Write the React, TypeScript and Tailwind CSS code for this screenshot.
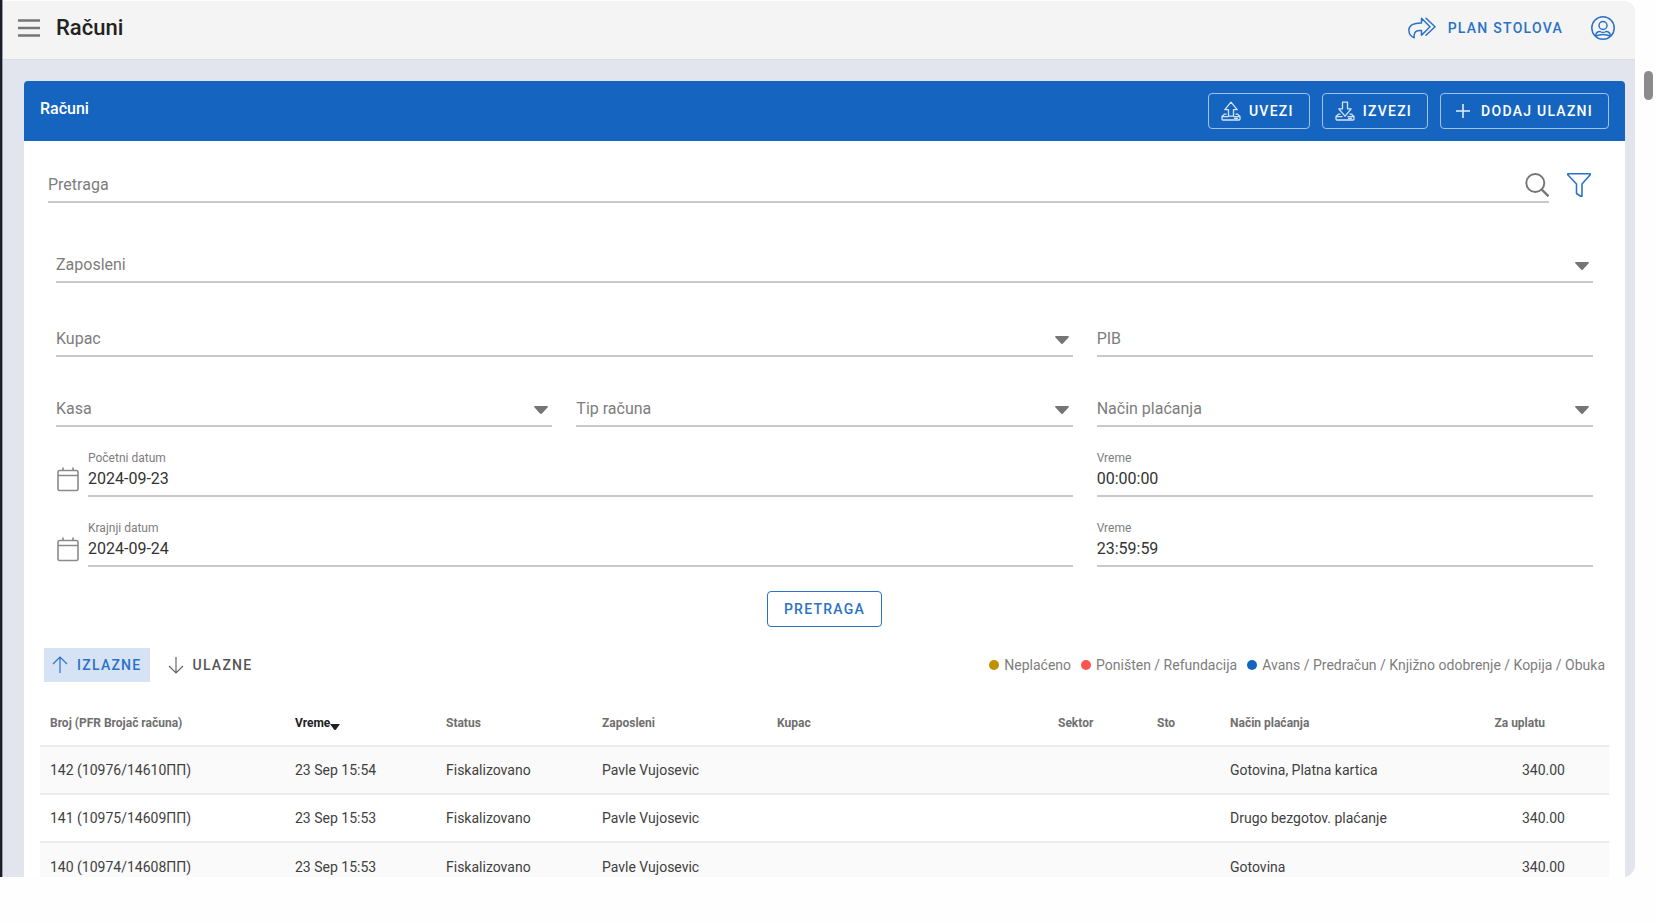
import React from 'react';

type FieldProps = { id: string; label: string; value?: string };

const Caret: React.FC = () => (
    <svg viewBox="0 0 14 8" className="mt-[9px] mr-1 h-2 w-3.5 fill-[#757575]" aria-hidden="true">
        <path d="M.8 0h12.400a.7.7 0 0 1 .5 1.200L8 7.500a1.400 1.400 0 0 1-2 0L.3 1.200A.7.7 0 0 1 .8 0z" />
    </svg>
);

const SelectField: React.FC<FieldProps> = ({ id, label }) => (
    <div className="flex h-[30px] min-w-0 flex-1 items-start border-b-2 border-[#c9c9c9]">
        <select id={id} aria-label={label} className="h-6 min-w-0 flex-1 appearance-none bg-transparent text-base leading-6 text-[#7d7d7d] outline-none">
            <option>{label}</option>
        </select>
        <Caret />
    </div>
);

const TextField: React.FC<FieldProps> = ({ id, label }) => (
    <div className="flex h-[30px] min-w-0 flex-1 items-start border-b-2 border-[#c9c9c9]">
        <input id={id} aria-label={label} placeholder={label} className="h-6 w-full bg-transparent text-base leading-6 outline-none placeholder:text-[#7d7d7d]" />
    </div>
);

const ValueField: React.FC<FieldProps> = ({ id, label, value }) => (
    <div className="flex min-w-0 flex-1 flex-col border-b-2 border-[#c9c9c9] pb-1">
        <label htmlFor={id} className="text-xs leading-4 text-[#7d7d7d]">{label}</label>
        <input id={id} defaultValue={value} className="mt-px h-6 w-full bg-transparent text-base leading-6 text-[#333333] outline-none" />
    </div>
);

const CalendarIcon: React.FC = () => (
    <svg viewBox="0 0 24 26" className="mt-4 mr-2 h-[26px] w-6 shrink-0 fill-none stroke-[#8a8a8a]" strokeWidth="1.6" aria-hidden="true">
        <rect x="2" y="4.500" width="20" height="20" rx="1.600" />
        <path d="M2 9.500h20M7 1.500v3M17 1.500v3" />
    </svg>
);

const TrayIcon: React.FC<{ down?: boolean }> = ({ down }) => (
    <svg viewBox="0 0 20 20" className="h-5 w-5 fill-none stroke-[#d5e3f5]" strokeWidth="1.3" strokeLinejoin="round" strokeLinecap="round" aria-hidden="true">
        {down ? (
            <path d="M7.500 1.200h5v6.600h3.700L10 15.200 3.800 7.800h3.700z" />
        ) : (
            <path d="M7.500 15.200V8.600H3.800L10 1.200l6.200 7.400h-3.700v6.600z" />
        )}
        <path d="M5 13.200H3.400L1 15.400V18a1 1 0 0 0 1 1h16a1 1 0 0 0 1-1v-2.600l-2.400-2.200H15M1.200 15.700H7M13 15.700h5.800M13.500 17.300h3" />
    </svg>
);

const PlusIcon: React.FC = () => (
    <svg viewBox="0 0 20 20" className="h-5 w-5 stroke-[#e3edf9]" strokeWidth="1.6" aria-hidden="true">
        <path d="M10 3v14M3 10h14" />
    </svg>
);

const ToolbarButton: React.FC<{ icon: React.ReactNode; children: React.ReactNode }> = ({ icon, children }) => (
    <button className="flex h-9 items-center gap-2 rounded border border-[#a3c1e8] pr-[15px] pl-3 text-sm font-medium tracking-[0.09em] text-white">
        {icon}
        {children}
    </button>
);

const columns = [
    { label: 'Broj (PFR Brojač računa)', style: 'w-[245px] px-[10px]' },
    { label: 'Vreme', style: 'w-[151px] px-[10px]', sorted: true },
    { label: 'Status', style: 'w-[156px] px-[10px]' },
    { label: 'Zaposleni', style: 'w-[175px] px-[10px]' },
    { label: 'Kupac', style: 'px-[10px]' },
    { label: 'Sektor', style: 'w-[99px] px-[10px]' },
    { label: 'Sto', style: 'w-[73px] px-[10px]' },
    { label: 'Način plaćanja', style: 'w-[244px] px-[10px]' },
    { label: 'Za uplatu', style: 'w-[145px] pr-16 text-right' },
];

const invoices = [
    { number: '142 (10976/14610ПП)', time: '23 Sep 15:54', payment: 'Gotovina, Platna kartica' },
    { number: '141 (10975/14609ПП)', time: '23 Sep 15:53', payment: 'Drugo bezgotov. plaćanje' },
    { number: '140 (10974/14608ПП)', time: '23 Sep 15:53', payment: 'Gotovina' },
];

const legend = [
    { label: 'Neplaćeno', color: 'bg-[#bf9000]' },
    { label: 'Poništen / Refundacija', color: 'bg-[#ff5252]' },
    { label: 'Avans / Predračun / Knjižno odobrenje / Kopija / Obuka', color: 'bg-[#1565c0]' },
];

const Header: React.FC = () => (
    <header className="flex h-[59px] items-center border-b border-[#dcdee4] bg-[#f4f4f4] pr-5 pb-1 pl-[15px]">
        <button aria-label="Meni">
            <svg viewBox="0 0 22 20" className="h-5 w-[22px] stroke-[#757575]" strokeWidth="2.4" aria-hidden="true">
                <path d="M0 2.500h22M0 10h22M0 17.500h22" />
            </svg>
        </button>
        <h1 className="ml-4 text-[22px] leading-7 font-medium text-[#222222]">Računi</h1>
        <a href="#stolovi" className="ml-auto flex items-center gap-3 text-sm font-medium tracking-[0.09em] text-[#2a72c8]">
            <svg viewBox="0 0 28 22" className="h-[22px] w-7 fill-none stroke-[#2a72c8]" strokeWidth="1.5" strokeLinejoin="round" strokeLinecap="round" aria-hidden="true">
                <path d="M13.500 1.200 22 9.800l-8.500 8.400v-4.700C8.500 13 5.500 14.500 6.200 20.800 2.500 19.500.8 16.500.9 13 1 8.300 5.500 5.800 13.500 6z" />
                <path d="M18 1.200l9 8.600-9 8.400" />
            </svg>
            PLAN STOLOVA
        </a>
        <button aria-label="Nalog" className="ml-7">
            <svg viewBox="0 0 24 24" className="h-6 w-6 fill-none stroke-[#2a72c8]" strokeWidth="1.5" strokeLinejoin="round" aria-hidden="true">
                <circle cx="12" cy="12" r="11.200" />
                <circle cx="12" cy="9.500" r="4" />
                <path d="M4.800 20.200c-.3-3.200 1.700-4.700 4.200-4.700 1.500 1 4.500 1 6 0 2.500 0 4.500 1.500 4.200 4.700-2.200-1.200-4.500-1.700-7.200-1.700s-5 .5-7.200 1.700z" />
            </svg>
        </button>
    </header>
);

const Filters: React.FC = () => (
    <form className="px-6 pt-8" onSubmit={(e) => e.preventDefault()}>
        <div className="flex items-start gap-[18px] pr-[10px]">
            <div className="flex h-[30px] flex-1 border-b-2 border-[#c9c9c9]">
                <input id="search" aria-label="Pretraga" placeholder="Pretraga" className="h-6 flex-1 bg-transparent text-base leading-6 outline-none placeholder:text-[#7d7d7d]" />
                <svg viewBox="0 0 24 24" className="h-6 w-6 fill-none stroke-[#757575]" strokeWidth="1.9" aria-hidden="true">
                    <circle cx="10.300" cy="10" r="9" />
                    <path d="m16.700 16.500 6.800 6.800" strokeWidth="2.400" />
                </svg>
            </div>
            <button type="button" aria-label="Filter">
                <svg viewBox="0 0 24 24" className="h-6 w-6 fill-none stroke-[#2a72c8]" strokeWidth="1.6" strokeLinejoin="round" aria-hidden="true">
                    <path d="M.8.8h22.400v1L15 11v12.200h-1.200L9.500 20.500V11L.8 1.800z" />
                </svg>
            </button>
        </div>
        <div className="mt-[50px] px-2">
            <div className="flex"><SelectField id="employee" label="Zaposleni" /></div>
            <div className="mt-11 grid grid-cols-3 gap-6">
                <div className="col-span-2 flex"><SelectField id="customer" label="Kupac" /></div>
                <TextField id="pib" label="PIB" />
            </div>
            <div className="mt-10 grid grid-cols-3 gap-6">
                <SelectField id="register" label="Kasa" />
                <SelectField id="type" label="Tip računa" />
                <SelectField id="payment" label="Način plaćanja" />
            </div>
            <div className="mt-[23px] grid grid-cols-3 gap-6">
                <div className="col-span-2 flex h-[47px]">
                    <CalendarIcon />
                    <ValueField id="date-from" label="Početni datum" value="2024-09-23" />
                </div>
                <ValueField id="time-from" label="Vreme" value="00:00:00" />
            </div>
            <div className="mt-[23px] grid grid-cols-3 gap-6">
                <div className="col-span-2 flex h-[47px]">
                    <CalendarIcon />
                    <ValueField id="date-to" label="Krajnji datum" value="2024-09-24" />
                </div>
                <ValueField id="time-to" label="Vreme" value="23:59:59" />
            </div>
        </div>
        <div className="mt-6 flex justify-center">
            <button type="submit" className="h-9 rounded border border-[#2a72c8] px-4 text-sm font-medium tracking-[0.09em] text-[#2a72c8]">
                PRETRAGA
            </button>
        </div>
    </form>
);

const InvoiceTable: React.FC = () => (
    <table className="mt-4 w-full table-fixed text-sm text-[#3f3f3f]">
        <thead>
            <tr className="h-12 text-left text-xs text-[#6f6f6f]">
                {columns.map((col) => (
                    <th key={col.label} className={`${col.style} pt-0.5 font-bold`}>
                        {col.sorted ? (
                            <span className="flex items-center text-[#212121]">
                                {col.label}
                                <svg viewBox="0 0 10 6" className="mt-2 h-1.5 w-2.5 fill-[#212121]" aria-hidden="true">
                                    <path d="M0 0h10L6 5.500a1.300 1.300 0 0 1-2 0z" />
                                </svg>
                            </span>
                        ) : col.label}
                    </th>
                ))}
            </tr>
        </thead>
        <tbody>
            {invoices.map((row) => (
                <tr key={row.number} className="h-12 border-t-2 border-[#ececec] odd:bg-[#fafafa]">
                    <td className="px-[10px]">{row.number}</td>
                    <td className="px-[10px]">{row.time}</td>
                    <td className="px-[10px]">Fiskalizovano</td>
                    <td className="px-[10px]">Pavle Vujosevic</td>
                    <td />
                    <td />
                    <td />
                    <td className="px-[10px]">{row.payment}</td>
                    <td className="pr-11 text-right">340.00</td>
                </tr>
            ))}
        </tbody>
    </table>
);

const App: React.FC = () => (
    <div className="flex h-screen bg-[#fefefe] pb-[46px] font-[Roboto,sans-serif]">
        <div className="w-[3px] shrink-0 border-r border-[#9a9ca6] bg-[#1b1d2b]" />
        <div className="mt-px flex min-w-0 flex-1 flex-col overflow-hidden rounded-r-xl bg-[#e2e5ee]">
            <Header />
            <main className="min-h-0 flex-1 overflow-hidden pt-[21px] pr-[10px] pl-[21px]">
                <section className="rounded-t bg-white">
                    <div className="flex h-[60px] items-center gap-3 rounded-t bg-[#1565c0] px-4">
                        <h2 className="mr-auto pb-1 text-base font-medium text-white">Računi</h2>
                        <ToolbarButton icon={<TrayIcon />}>UVEZI</ToolbarButton>
                        <ToolbarButton icon={<TrayIcon down />}>IZVEZI</ToolbarButton>
                        <ToolbarButton icon={<PlusIcon />}>DODAJ ULAZNI</ToolbarButton>
                    </div>
                    <Filters />
                    <div className="px-4">
                        <div className="mt-[21px] flex items-center gap-[10px] px-1">
                            <button className="flex h-[34px] items-center gap-[9px] bg-[#d6e3f4] px-2 text-sm font-medium tracking-[0.09em] text-[#2a72c8]">
                                <svg viewBox="0 0 16 18" className="h-[18px] w-4 fill-none stroke-[#2a72c8]" strokeWidth="1.2" aria-hidden="true">
                                    <path d="M8 17V1M1 8l7-7 7 7" />
                                </svg>
                                IZLAZNE
                            </button>
                            <button className="flex h-[34px] items-center gap-[9px] px-2 text-sm font-medium tracking-[0.09em] text-[#555555]">
                                <svg viewBox="0 0 16 18" className="h-[18px] w-4 fill-none stroke-[#666666]" strokeWidth="1.2" aria-hidden="true">
                                    <path d="M8 1v16M1 10l7 7 7-7" />
                                </svg>
                                ULAZNE
                            </button>
                            <ul className="ml-auto flex gap-[10px] text-sm text-[#7d7d7d]">
                                {legend.map((item) => (
                                    <li key={item.label} className="flex items-center gap-[5px]">
                                        <span className={`h-2.5 w-2.5 rounded-full ${item.color}`} />
                                        {item.label}
                                    </li>
                                ))}
                            </ul>
                        </div>
                        <InvoiceTable />
                    </div>
                </section>
            </main>
        </div>
        <div className="w-[21px] shrink-0 pt-[71px] pl-[9px]">
            <div className="h-[29px] w-[9px] rounded-full bg-[#8b8b8b]" />
        </div>
    </div>
);

export default App;
